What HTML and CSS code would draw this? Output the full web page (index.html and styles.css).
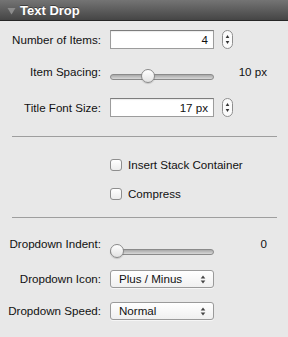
FILE: index.html
```html
<!DOCTYPE html>
<html>
<head>
    <title>Text Drop</title>
    <link rel="stylesheet" href="styles.css">
</head>
<body>
    <div class="inspector">
        <div class="titlebar">
            <svg class="disclosure" width="9" height="8" viewBox="0 0 9 8"><path d="M0.5 1 L8.5 1 L4.5 7.5 Z" fill="#8c8c8c"/></svg>
            <span class="title">Text Drop</span>
        </div>

        <div class="content">
            <div class="row row-items">
                <label class="label">Number of Items:</label>
                <div class="field">4</div>
                <span class="stepper"><svg width="11" height="19" viewBox="0 0 11 19"><rect x="0.5" y="0.5" width="10" height="18" rx="5" fill="#fbfbfb" stroke="#8e8e8e"/><path d="M5.5 5 L7.3 8 L3.7 8 Z" fill="#333"/><path d="M5.5 14 L7.3 11 L3.7 11 Z" fill="#333"/></svg></span>
            </div>

            <div class="row row-slider row-spacing">
                <label class="label">Item Spacing:</label>
                <div class="slider"><div class="track"></div><div class="knob" style="left: 31px"></div></div>
                <span class="value">10 px</span>
            </div>

            <div class="row row-font">
                <label class="label">Title Font Size:</label>
                <div class="field">17 px</div>
                <span class="stepper"><svg width="11" height="19" viewBox="0 0 11 19"><rect x="0.5" y="0.5" width="10" height="18" rx="5" fill="#fbfbfb" stroke="#8e8e8e"/><path d="M5.5 5 L7.3 8 L3.7 8 Z" fill="#333"/><path d="M5.5 14 L7.3 11 L3.7 11 Z" fill="#333"/></svg></span>
            </div>

            <hr class="sep sep-first">

            <label class="check check-first"><span class="box"></span>Insert Stack Container</label>
            <label class="check check-second"><span class="box"></span>Compress</label>

            <hr class="sep sep-second">

            <div class="row row-slider row-indent">
                <label class="label">Dropdown Indent:</label>
                <div class="slider"><div class="track"></div><div class="knob" style="left: 0px"></div></div>
                <span class="value">0</span>
            </div>

            <div class="row row-icon">
                <label class="label">Dropdown Icon:</label>
                <div class="popup"><span>Plus / Minus</span><svg width="6" height="9" viewBox="0 0 6 9"><path d="M3 0.5 L5.3 3.5 L0.7 3.5 Z" fill="#444"/><path d="M3 8.5 L5.3 5.5 L0.7 5.5 Z" fill="#444"/></svg></div>
            </div>

            <div class="row row-speed">
                <label class="label">Dropdown Speed:</label>
                <div class="popup"><span>Normal</span><svg width="6" height="9" viewBox="0 0 6 9"><path d="M3 0.5 L5.3 3.5 L0.7 3.5 Z" fill="#444"/><path d="M3 8.5 L5.3 5.5 L0.7 5.5 Z" fill="#444"/></svg></div>
            </div>
        </div>
    </div>
</body>
</html>
```

FILE: styles.css
```css
body { margin: 0; background-color: #e8e8e8; font-family: "Liberation Sans", Arial, sans-serif; font-size: 11.6px; color: #111; }
.inspector { width: 288px; height: 337px; background-color: #e8e8e8; }

.titlebar { height: 20px; border-bottom: 1px solid #262626; background: linear-gradient(#747474, #454545); display: flex; align-items: center; }
.disclosure { margin-left: 7px; margin-top: 1px; }
.title { margin-left: 4px; color: #fff; font-weight: bold; font-size: 13px; text-shadow: 0 -1px 0 rgba(0,0,0,0.4); }

.content { padding-top: 9px; }
.row { display: flex; align-items: flex-start; }
.label { width: 101px; text-align: right; white-space: nowrap; flex-shrink: 0; margin-right: 9px; }

.row-items { height: 19px; }
.row-spacing { height: 20px; margin-top: 13px; }
.row-font { height: 19px; margin-top: 16px; }
.row-indent { height: 20px; margin-top: 16px; }
.row-icon { height: 18px; margin-top: 16px; }
.row-speed { height: 18px; margin-top: 14px; }

.row-items .label, .row-font .label { line-height: 19px; }
.row-slider .label, .row-slider .value { line-height: 20px; }
.row-icon .label, .row-speed .label { line-height: 18px; }

.field { box-sizing: border-box; width: 104px; height: 19px; line-height: 17px; border: 1px solid #9c9c9c; border-top-color: #7d7d7d; background: #fff; text-align: right; padding-right: 5px; box-shadow: inset 0 1px 1px rgba(0,0,0,0.08); }
.stepper { margin-left: 8px; height: 19px; }
.stepper svg { display: block; }

.slider { position: relative; width: 104px; height: 14px; margin-top: 7px; }
.row-indent .slider { margin-top: 10px; }
.track { position: absolute; left: 0; right: 0; top: 5px; height: 4px; border: 1px solid #8a8a8a; border-radius: 3px; background: linear-gradient(#a8a8a8, #d8d8d8); }
.knob { position: absolute; top: 0; width: 12px; height: 12px; border: 1px solid #8a8a8a; border-radius: 50%; background: linear-gradient(#ffffff, #e2e2e2); box-shadow: 0 1px 1px rgba(0,0,0,0.15); }
.value { width: 53px; text-align: right; }

.sep { border: 0; height: 1px; background: #9e9e9e; width: 265px; margin: 0 0 0 12px; }
.sep-first { margin-top: 19px; }
.sep-second { margin-top: 17px; }

.check { display: flex; align-items: center; height: 13px; margin-left: 110px; }
.check-first { margin-top: 21px; }
.check-second { margin-top: 16px; }
.box { box-sizing: border-box; width: 12px; height: 12px; border: 1px solid #8e8e8e; border-radius: 3px; background: linear-gradient(#ffffff, #ececec); margin-right: 6px; }

.popup { box-sizing: border-box; width: 104px; height: 18px; border: 1px solid #9a9a9a; border-radius: 3px; background: linear-gradient(#ffffff, #f0f0f0); display: flex; align-items: center; justify-content: space-between; padding: 0 7px 0 8px; box-shadow: 0 1px 0 rgba(255,255,255,0.6); }
.popup span { line-height: 16px; }
```
